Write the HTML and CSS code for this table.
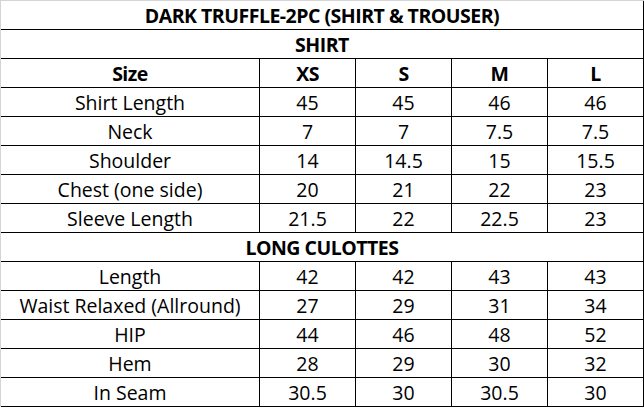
FILE: index.html
```html
<!DOCTYPE html>
<html lang="en">
<head>
<meta charset="utf-8">
<title>Dark Truffle Size Chart</title>
<link rel="stylesheet" href="styles.css">
</head>
<body>
<table class="chart">
  <colgroup>
    <col class="c-label">
    <col class="c-size">
    <col class="c-size">
    <col class="c-size">
    <col class="c-size">
  </colgroup>
  <tbody>
    <tr><td class="head" colspan="5">DARK TRUFFLE-2PC (SHIRT &amp; TROUSER)</td></tr>
    <tr><td class="head" colspan="5">SHIRT</td></tr>
    <tr class="bold"><td>Size</td><td>XS</td><td>S</td><td>M</td><td>L</td></tr>
    <tr><td>Shirt Length</td><td>45</td><td>45</td><td>46</td><td>46</td></tr>
    <tr><td>Neck</td><td>7</td><td>7</td><td>7.5</td><td>7.5</td></tr>
    <tr><td>Shoulder</td><td>14</td><td>14.5</td><td>15</td><td>15.5</td></tr>
    <tr><td>Chest (one side)</td><td>20</td><td>21</td><td>22</td><td>23</td></tr>
    <tr><td>Sleeve Length</td><td>21.5</td><td>22</td><td>22.5</td><td>23</td></tr>
    <tr><td class="head" colspan="5">LONG CULOTTES</td></tr>
    <tr><td>Length</td><td>42</td><td>42</td><td>43</td><td>43</td></tr>
    <tr><td>Waist Relaxed (Allround)</td><td>27</td><td>29</td><td>31</td><td>34</td></tr>
    <tr><td>HIP</td><td>44</td><td>46</td><td>48</td><td>52</td></tr>
    <tr><td>Hem</td><td>28</td><td>29</td><td>30</td><td>32</td></tr>
    <tr><td>In Seam</td><td>30.5</td><td>30</td><td>30.5</td><td>30</td></tr>
  </tbody>
</table>
</body>
</html>
```
FILE: styles.css
```css
html, body {
  margin: 0;
  padding: 0;
  background: #ffffff;
}

.chart {
  border-collapse: separate;
  border-spacing: 0;
  table-layout: fixed;
  width: 644px;
  border-top: 1px solid #d4d4d4;
  border-left: 1px solid #d4d4d4;
  font-family: "Open Sans", "Liberation Sans", sans-serif;
  font-size: 19.5px;
  color: #000000;
}

.c-label { width: 259px; }
.c-size { width: 96px; }

.chart td {
  box-sizing: border-box;
  height: 29px;
  padding: 2px 0 0;
  line-height: 26px;
  text-align: center;
  vertical-align: top;
  white-space: nowrap;
  border-right: 1px solid #000000;
  border-bottom: 1px solid #000000;
  overflow: hidden;
}

.chart .head,
.chart .bold td {
  font-weight: 700;
  letter-spacing: -0.5px;
}
```
